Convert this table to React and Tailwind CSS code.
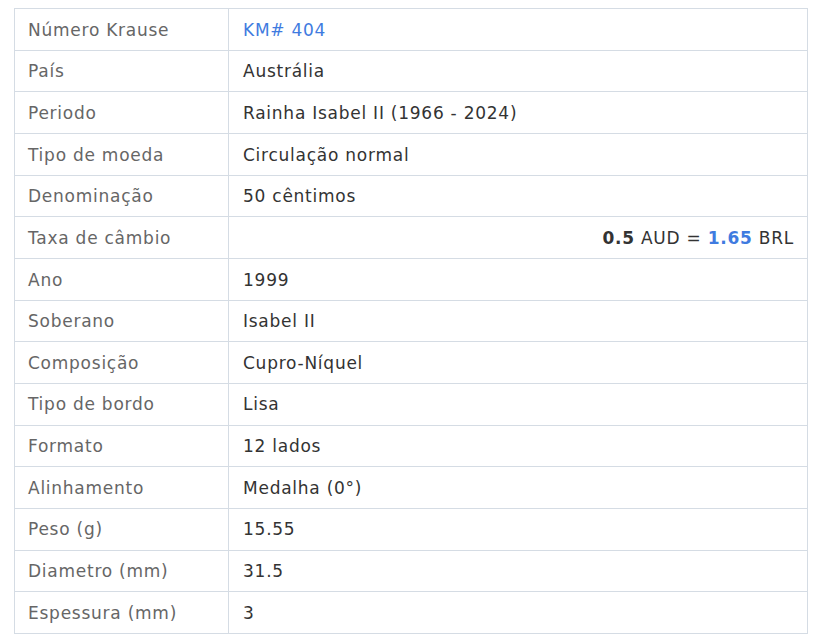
import React from "react";

const rows = [
  ["Número Krause", "KM# 404", "link"],
  ["País", "Austrália"],
  ["Periodo", "Rainha Isabel II (1966 - 2024)"],
  ["Tipo de moeda", "Circulação normal"],
  ["Denominação", "50 cêntimos"],
  ["Taxa de câmbio", null, "rate"],
  ["Ano", "1999"],
  ["Soberano", "Isabel II"],
  ["Composição", "Cupro-Níquel"],
  ["Tipo de bordo", "Lisa"],
  ["Formato", "12 lados"],
  ["Alinhamento", "Medalha (0°)"],
  ["Peso (g)", "15.55"],
  ["Diametro (mm)", "31.5"],
  ["Espessura (mm)", "3"],
];

export default function App() {
  return (
    <div className="bg-white w-[828px] h-[644px] pt-[8px] pl-[14px] font-['DejaVu_Sans',Verdana,sans-serif]">
      <table className="w-[794px] border-collapse text-[17px] tracking-[0.75px]">
        <tbody>
          {rows.map(([label, value, kind], i) => (
            <tr key={i} className="h-[41.67px]">
              <td className="w-[214px] border border-[#d5dce4] pl-[13px] pr-[4px] pt-[2px] pb-0 text-[#666666] align-middle">{label}</td>
              <td className={`border border-[#d5dce4] pl-[14px] pr-[13px] pt-[2px] pb-0 align-middle ${kind === "rate" ? "text-right" : ""} ${kind === "link" ? "text-[#3f7be0]" : "text-[#333333]"}`}>
                {kind === "rate" ? (
                  <span>
                    <b className="font-bold">0.5</b> AUD = <b className="font-bold text-[#3f7be0]">1.65</b> BRL
                  </span>
                ) : (
                  value
                )}
              </td>
            </tr>
          ))}
        </tbody>
      </table>
    </div>
  );
}
